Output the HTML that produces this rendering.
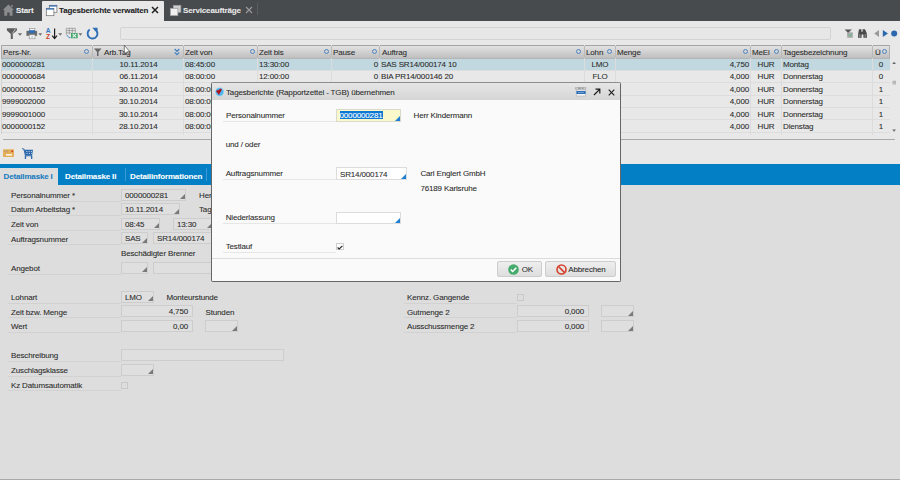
<!DOCTYPE html>
<html><head><meta charset="utf-8">
<style>
*{margin:0;padding:0;box-sizing:border-box}
html,body{width:900px;height:480px;overflow:hidden;background:#dddddd;font-family:"Liberation Sans",sans-serif;font-size:8px;letter-spacing:-0.15px;color:#2b2b2b}
.a{position:absolute}
.t{position:absolute;white-space:nowrap;line-height:9px;-webkit-text-stroke:0.08px currentColor}
.b{font-weight:bold}
#top{left:0;top:0;width:900px;height:21px;background:#474b4e}
#upper{left:0;top:21px;width:900px;height:143px;background:#e8e8e8}
#blue{left:0;top:164px;width:900px;height:21px;background:#0380c5}
#bottomline{left:0;top:479px;width:900px;height:1px;background:#a9a9ad}
.hdr{top:45px;height:13.5px;background:linear-gradient(#e2e2e2,#bfbfbf);border-top:1px solid #a2a6a8;border-bottom:1px solid #b4b4b4}
.col{position:absolute;top:45px;height:89.5px;border-left:1px solid #dcdcdc}
.hsep{position:absolute;top:46px;height:12px;width:1px;background:#b9b9b9}
.row{position:absolute;left:1px;width:889px;height:12.4px;border-bottom:1px solid #dddddd}
.circ{position:absolute;width:5.4px;height:5.4px;border:1.1px solid #4f86c2;border-radius:50%}
.fld{position:absolute;background:#dfdfdf;border:1px solid #cdcdcd}
.dd::after{content:"";position:absolute;right:0.5px;bottom:0.5px;border-left:5px solid transparent;border-bottom:5px solid #7a7a7a}
.lbl{position:absolute;height:1px;background:#d2d2d2}
</style></head><body>
<!-- top tab bar -->
<div class="a" id="top"></div>
<div class="a" style="left:42px;top:1px;width:122px;height:20px;background:#e8e8e8;border-radius:1px 1px 0 0"></div>
<!-- home icon -->
<svg class="a" style="left:2px;top:3px" width="13" height="14" viewBox="2 3 13 14"><path d="M8.4 4.4 L2.8 10 L4.3 10 L4.3 15.8 L7.2 15.8 L7.2 12.6 L9.6 12.6 L9.6 15.8 L12.5 15.8 L12.5 10 L14 10 Z" fill="#8b8c8d"/><path d="M11 5 L12.6 5 L12.6 7.6 L11 6.2 Z" fill="#8b8c8d"/></svg>
<div class="t b" style="left:16px;top:6px;color:#f0f0f0">Start</div>
<!-- window icon active -->
<svg class="a" style="left:45px;top:4px" width="13" height="13" viewBox="45 4 13 13"><rect x="49.3" y="5.3" width="7.6" height="7" fill="#fff" stroke="#6a6a6a" stroke-width="0.7"/><rect x="49.3" y="5.3" width="7.6" height="1.3" fill="#2f6fb5"/><rect x="46.3" y="8.3" width="7.6" height="7.4" fill="#fff" stroke="#6a6a6a" stroke-width="0.7"/><rect x="46.3" y="8.3" width="7.6" height="1.3" fill="#2f6fb5"/></svg>
<div class="t b" style="left:59px;top:6px;color:#222">Tagesberichte verwalten</div>
<svg class="a" style="left:151px;top:6px" width="8" height="8" viewBox="0 0 8 8"><path d="M1 1L7 7M7 1L1 7" stroke="#222" stroke-width="1.5"/></svg>
<!-- window icon inactive -->
<svg class="a" style="left:169px;top:4px" width="13" height="13" viewBox="169 4 13 13"><rect x="173.3" y="5.3" width="7.6" height="7" fill="#cfcfcf" stroke="#9a9a9a" stroke-width="0.7"/><rect x="170.3" y="8.3" width="7.6" height="7.4" fill="#f0f0f0" stroke="#9a9a9a" stroke-width="0.7"/></svg>
<div class="t b" style="left:183px;top:6px;color:#e8e8e8">Serviceaufträge</div>
<svg class="a" style="left:245px;top:6px" width="8" height="8" viewBox="0 0 8 8"><path d="M1 1L7 7M7 1L1 7" stroke="#9a9a9a" stroke-width="1.2"/></svg>
<div class="a" style="left:257px;top:3px;width:1px;height:12px;background:#5c5f62"></div>

<!-- upper area -->
<div class="a" id="upper"></div>
<!-- toolbar icons -->
<svg class="a" style="left:0;top:24px" width="104" height="18" viewBox="0 24 104 18">
<path d="M6.9 28.2 L16.9 28.2 L16.9 30.6 L12.8 34 L12.8 38.9 L10.8 38.9 L10.8 34 L6.9 30.6 Z" fill="#5e5e5e"/>
<path d="M15.6 28.8 L12.2 33.6" stroke="#e8e8e8" stroke-width="0.7"/>
<path d="M17.8 33.2 L22.2 33.2 L20 35.8 Z" fill="#707070"/>
<rect x="29.3" y="28.4" width="5.6" height="5" fill="#f4f4f4" stroke="#8a8a8a" stroke-width="0.6"/>
<rect x="26.4" y="30.9" width="10.7" height="4.9" fill="#6c6c6c"/>
<rect x="28.8" y="30.2" width="6.2" height="2.9" fill="#2f6db5"/>
<rect x="29.2" y="34.8" width="5.8" height="4" fill="#f6f6f6" stroke="#8a8a8a" stroke-width="0.6"/>
<rect x="31.4" y="36.4" width="1.4" height="1.2" fill="#8fb2dc"/>
<path d="M38.3 33.2 L42.3 33.2 L40.3 35.8 Z" fill="#707070"/>
<text x="45.7" y="33.2" font-family="Liberation Sans" font-weight="bold" font-size="6.6" fill="#3474c0">A</text>
<text x="45.9" y="39.3" font-family="Liberation Sans" font-weight="bold" font-size="6.6" fill="#cc3b25">Z</text>
<path d="M54.6 28.6 L54.6 38.4 M52.2 35.6 L54.6 38.6 L57 35.6" stroke="#1e1e1e" stroke-width="1.2" fill="none"/>
<path d="M58.2 33.3 L62.2 33.3 L60.2 35.8 Z" fill="#707070"/>
<path d="M66.3 28.3 h9 v7 M66.3 28.3 v6.5 M66.3 30.6 h9 M66.3 32.9 h5 M69.3 28.3 v6 M72.3 28.3 v5" stroke="#8d8d8d" stroke-width="0.7" fill="none"/>
<path d="M66.8 35 L69 37.6 L70.5 37.6" stroke="#3a7cc4" stroke-width="0.9" fill="none"/>
<rect x="71" y="33" width="6.7" height="5.3" fill="#43a66a"/>
<path d="M72.6 34 L76.1 37.3 M76.1 34 L72.6 37.3" stroke="#e9f6ee" stroke-width="1.1"/>
<path d="M78.5 33.3 L82.3 33.3 L80.4 35.8 Z" fill="#707070"/>
<path d="M89.7 29.6 A4.9 4.9 0 1 0 94.7 29.2" stroke="#2f6fb6" stroke-width="1.9" fill="none"/>
<path d="M92.3 27.8 L97.6 27.8 L97.4 33.3 Z" fill="#2f6fb6"/>
</svg>
<!-- search input -->
<div class="a" style="left:120px;top:27px;width:711px;height:13px;background:#e7e7e7;border:1px solid #d3d3d3;border-radius:2px"></div>
<!-- right toolbar icons -->
<svg class="a" style="left:838px;top:24px" width="62" height="20" viewBox="838 24 62 20">
<path d="M844.6 29.5 L852 29.5 L849 32.5 L849 36 L847.6 36 L847.6 32.5 Z" fill="#555"/>
<path d="M851.3 29.8 L849.5 32" stroke="#ddd" stroke-width="0.5"/>
<rect x="847.2" y="32.3" width="5.6" height="5.5" fill="#a9a9a9"/>
<path d="M848.6 35 L849.8 36.2 L851.8 34" stroke="#3cc47a" stroke-width="0.9" fill="none"/>
<path d="M859 29.3 h2.4 v2.5 h1.2 v-2.5 h2.4 L866.7 33 L867 37.8 L863.4 37.8 L863.4 34.5 L861.6 34.5 L861.6 37.8 L858 37.8 L858.3 33 Z" fill="#4a4a4a"/>
<rect x="859.2" y="34.2" width="1.2" height="3" fill="#8a8a8a"/>
<rect x="864.6" y="34.2" width="1.2" height="3" fill="#8a8a8a"/>
<path d="M879 29.9 L874.2 33.5 L879 37.1 Z" fill="#9a9a9a"/>
<path d="M882.8 29.9 L888 33.5 L882.8 37.1 Z" fill="#2c68ad"/>
<circle cx="894.2" cy="33.4" r="3" fill="#2c68ad"/>
</svg>
<!-- grid -->
<div class="a hdr" style="left:1px;width:889px"></div>
<div class="a" style="left:1px;top:58.5px;width:889px;height:12.4px;background:#c1d8e0"></div>
<div class="row" style="top:58.5px"></div>
<div class="row" style="top:70.9px"></div>
<div class="row" style="top:83.3px"></div>
<div class="row" style="top:95.7px"></div>
<div class="row" style="top:108.1px"></div>
<div class="row" style="top:120.5px"></div>
<div class="a" style="left:1px;top:45px;width:1px;height:13.5px;background:#a8a8a8"></div><div class="a" style="left:1px;top:58.5px;width:1px;height:75px;background:#d2d2d2"></div>
<div class="a" style="left:889px;top:45px;width:1px;height:13.5px;background:#b0b0b0"></div>
<!-- column separators -->
<div class="col" style="left:92px"></div>
<div class="col" style="left:183px"></div>
<div class="col" style="left:257px"></div>
<div class="col" style="left:331px"></div>
<div class="col" style="left:379px"></div>
<div class="col" style="left:584px"></div>
<div class="col" style="left:615px"></div>
<div class="col" style="left:750px"></div>
<div class="col" style="left:781px"></div>
<div class="col" style="left:872px"></div>
<div class="hsep" style="left:92px"></div>
<div class="hsep" style="left:183px"></div>
<div class="hsep" style="left:257px"></div>
<div class="hsep" style="left:331px"></div>
<div class="hsep" style="left:379px"></div>
<div class="hsep" style="left:584px"></div>
<div class="hsep" style="left:615px"></div>
<div class="hsep" style="left:750px"></div>
<div class="hsep" style="left:781px"></div>
<div class="hsep" style="left:872px"></div>
<!-- header labels -->
<div class="t" style="left:3px;top:48px">Pers-Nr.</div>
<div class="circ" style="left:83.5px;top:49px"></div>
<svg class="a" style="left:94px;top:48px" width="8" height="8" viewBox="0 0 8 8"><path d="M0 0.5 L7.5 0.5 L4.5 4 L4.5 8 L3 8 L3 4 Z" fill="#666"/></svg>
<div class="t" style="left:104px;top:48px">Arb.Tag</div>
<svg class="a" style="left:174px;top:47.5px" width="6" height="8" viewBox="0 0 6 8"><path d="M0.7 1 L3 3.3 L5.3 1 M0.7 4.3 L3 6.6 L5.3 4.3" stroke="#3f7fc4" stroke-width="1.2" fill="none"/></svg>
<div class="t" style="left:185px;top:48px">Zeit von</div>
<div class="circ" style="left:249.5px;top:49px"></div>
<div class="t" style="left:259px;top:48px">Zeit bis</div>
<div class="circ" style="left:323.5px;top:49px"></div>
<div class="t" style="left:333px;top:48px">Pause</div>
<div class="circ" style="left:371.5px;top:49px"></div>
<div class="t" style="left:382px;top:48px">Auftrag</div>
<div class="circ" style="left:575.5px;top:49px"></div>
<div class="t" style="left:586px;top:48px">Lohn</div>
<div class="circ" style="left:606.5px;top:49px"></div>
<div class="t" style="left:617px;top:48px">Menge</div>
<div class="circ" style="left:742.5px;top:49px"></div>
<div class="t" style="left:752px;top:48px">MeEi</div>
<div class="circ" style="left:773.5px;top:49px"></div>
<div class="t" style="left:783px;top:48px">Tagesbezeichnung</div>
<div class="t" style="left:875px;top:48px">Ü</div>
<div class="circ" style="left:882px;top:49px"></div>

<!-- rows data -->
<div class="t" style="left:2px;top:59.9px">0000000281</div>
<div class="t" style="right:742.5px;top:59.9px">10.11.2014</div>
<div class="t" style="left:185px;top:59.9px">08:45:00</div>
<div class="t" style="left:259px;top:59.9px">13:30:00</div>
<div class="t" style="right:522px;top:59.9px">0</div>
<div class="t" style="left:381px;top:59.9px">SAS SR14/000174 10</div>
<div class="t" style="left:580px;width:40px;text-align:center;top:59.9px">LMO</div>
<div class="t" style="right:151px;top:59.9px">4,750</div>
<div class="t" style="left:746px;width:40px;text-align:center;top:59.9px">HUR</div>
<div class="t" style="left:783px;top:59.9px">Montag</div>
<div class="t" style="left:861px;width:40px;text-align:center;top:59.9px">0</div>
<div class="t" style="left:2px;top:72.3px">0000000684</div>
<div class="t" style="right:742.5px;top:72.3px">06.11.2014</div>
<div class="t" style="left:185px;top:72.3px">08:00:00</div>
<div class="t" style="left:259px;top:72.3px">12:00:00</div>
<div class="t" style="right:522px;top:72.3px">0</div>
<div class="t" style="left:381px;top:72.3px">BIA PR14/000146 20</div>
<div class="t" style="left:580px;width:40px;text-align:center;top:72.3px">FLO</div>
<div class="t" style="right:151px;top:72.3px">4,000</div>
<div class="t" style="left:746px;width:40px;text-align:center;top:72.3px">HUR</div>
<div class="t" style="left:783px;top:72.3px">Donnerstag</div>
<div class="t" style="left:861px;width:40px;text-align:center;top:72.3px">0</div>
<div class="t" style="left:2px;top:84.7px">0000000152</div>
<div class="t" style="right:742.5px;top:84.7px">30.10.2014</div>
<div class="t" style="left:185px;top:84.7px">08:00:00</div>
<div class="t" style="right:151px;top:84.7px">4,000</div>
<div class="t" style="left:746px;width:40px;text-align:center;top:84.7px">HUR</div>
<div class="t" style="left:783px;top:84.7px">Donnerstag</div>
<div class="t" style="left:861px;width:40px;text-align:center;top:84.7px">1</div>
<div class="t" style="left:2px;top:97.1px">9999002000</div>
<div class="t" style="right:742.5px;top:97.1px">30.10.2014</div>
<div class="t" style="left:185px;top:97.1px">08:00:00</div>
<div class="t" style="right:151px;top:97.1px">4,000</div>
<div class="t" style="left:746px;width:40px;text-align:center;top:97.1px">HUR</div>
<div class="t" style="left:783px;top:97.1px">Donnerstag</div>
<div class="t" style="left:861px;width:40px;text-align:center;top:97.1px">1</div>
<div class="t" style="left:2px;top:109.5px">9999001000</div>
<div class="t" style="right:742.5px;top:109.5px">30.10.2014</div>
<div class="t" style="left:185px;top:109.5px">08:00:00</div>
<div class="t" style="right:151px;top:109.5px">4,000</div>
<div class="t" style="left:746px;width:40px;text-align:center;top:109.5px">HUR</div>
<div class="t" style="left:783px;top:109.5px">Donnerstag</div>
<div class="t" style="left:861px;width:40px;text-align:center;top:109.5px">1</div>
<div class="t" style="left:2px;top:121.9px">0000000152</div>
<div class="t" style="right:742.5px;top:121.9px">28.10.2014</div>
<div class="t" style="left:185px;top:121.9px">08:00:00</div>
<div class="t" style="right:151px;top:121.9px">4,000</div>
<div class="t" style="left:746px;width:40px;text-align:center;top:121.9px">HUR</div>
<div class="t" style="left:783px;top:121.9px">Dienstag</div>
<div class="t" style="left:861px;width:40px;text-align:center;top:121.9px">1</div>

<svg class="a" style="left:890px;top:58px" width="10" height="80" viewBox="890 58 10 80"><path d="M892.2 64 L894.1 61.8 L896 64 Z" fill="#6a6a6a"/><path d="M892.5 81.3h3.5M892.5 82.6h3.5M892.5 83.9h3.5" stroke="#9a9a9a" stroke-width="0.8"/><path d="M892.2 129.5 L894.1 131.7 L896 129.5 Z" fill="#6a6a6a"/></svg>
<!-- grid bottom line -->
<div class="a" style="left:3px;top:138.5px;width:892px;height:1px;background:#a9a9a9"></div>
<!-- small icons -->
<svg class="a" style="left:0;top:142px" width="40" height="20" viewBox="0 142 40 20">
<rect x="3" y="149.3" width="11" height="7.6" rx="0.5" fill="#e3b05a"/>
<rect x="4.2" y="150.4" width="3.8" height="1.8" fill="#c9a069"/>
<circle cx="12.1" cy="151.3" r="1" fill="#d8402c"/>
<rect x="6" y="154" width="6" height="1.6" fill="#fbf3e4"/>
<path d="M22.2 148.5 L24 149.3 L25.5 155.8 L32.2 155.8" stroke="#2c67ab" stroke-width="1.1" fill="none"/>
<path d="M24.6 149.8 L33 149.8 L32.2 155.2 L25.6 155.2 Z" fill="#2c67ab"/>
<path d="M26.3 151.5 h1 M28.6 151.5 h1 M30.9 151.5 h1 M26.6 153.4 h1 M28.9 153.4 h1 M31.1 153.4 h0.8" stroke="#dfe8f2" stroke-width="0.9"/>
<rect x="24.8" y="156" width="1.3" height="3" fill="#2c67ab"/>
<rect x="31" y="156" width="1.3" height="3" fill="#2c67ab"/>
</svg>
<!-- blue tab bar -->
<div class="a" id="blue"></div>
<div class="a" style="left:0;top:167.5px;width:58px;height:17.5px;background:#dddddd"></div>
<div class="t b" style="left:3.5px;top:172px;color:#1a7cc0">Detailmaske I</div>
<div class="t b" style="left:65px;top:172px;color:#fff">Detailmaske II</div>
<div class="a" style="left:124.5px;top:168px;width:1px;height:13px;background:#3a9ad6"></div>
<div class="t b" style="left:130px;top:172px;color:#fff">Detailinformationen</div>
<div class="a" style="left:206px;top:168px;width:1px;height:13px;background:#3a9ad6"></div>

<!-- form -->
<div class="t" style="left:11px;top:190.87px">Personalnummer *</div>
<div class="lbl" style="left:8px;top:200.60px;width:113px"></div>
<div class="fld dd" style="left:121px;top:188.50px;width:65px;height:12.2px"><div class="t" style="left:3px;top:1.1px">0000000281</div></div>
<div class="t" style="left:199px;top:190.87px">Herr Kindermann</div>
<div class="t" style="left:11px;top:205.47px">Datum Arbeitstag *</div>
<div class="lbl" style="left:8px;top:215.20px;width:113px"></div>
<div class="fld dd" style="left:121px;top:203.10px;width:59px;height:12.2px"><div class="t" style="left:3px;top:1.1px">10.11.2014</div></div>
<div class="t" style="left:199px;top:205.47px">Tagesbezeichnung</div>
<div class="t" style="left:11px;top:220.07px">Zeit von</div>
<div class="lbl" style="left:8px;top:229.80px;width:113px"></div>
<div class="fld dd" style="left:121px;top:217.70px;width:39px;height:12.2px"><div class="t" style="left:3px;top:1.1px">08:45</div></div>
<div class="fld dd" style="left:173px;top:217.70px;width:40px;height:12.2px"><div class="t" style="left:3px;top:1.1px">13:30</div></div>
<div class="t" style="left:11px;top:234.67px">Auftragsnummer</div>
<div class="lbl" style="left:8px;top:244.40px;width:113px"></div>
<div class="fld dd" style="left:121px;top:232.30px;width:27px;height:12.2px"><div class="t" style="left:3px;top:1.1px">SAS</div></div>
<div class="fld" style="left:153px;top:232.30px;width:60px;height:12.2px"><div class="t" style="left:3px;top:1.1px">SR14/000174</div></div>
<div class="t" style="left:121px;top:249.27px">Beschädigter Brenner</div>
<div class="t" style="left:11px;top:263.87px">Angebot</div>
<div class="lbl" style="left:8px;top:273.60px;width:113px"></div>
<div class="fld dd" style="left:121px;top:261.50px;width:27px;height:12.2px"></div>
<div class="fld" style="left:153px;top:261.50px;width:60px;height:12.2px"></div>
<div class="t" style="left:11px;top:293.07px">Lohnart</div>
<div class="lbl" style="left:8px;top:302.80px;width:113px"></div>
<div class="fld dd" style="left:121px;top:290.70px;width:33px;height:12.2px"><div class="t" style="left:3px;top:1.1px">LMO</div></div>
<div class="t" style="left:166.5px;top:293.07px">Monteurstunde</div>
<div class="t" style="left:11px;top:307.67px">Zeit bzw. Menge</div>
<div class="lbl" style="left:8px;top:317.40px;width:113px"></div>
<div class="fld" style="left:121px;top:305.30px;width:72px;height:12.2px"><div class="t" style="right:4px;top:0.7px">4,750</div></div>
<div class="t" style="left:205.5px;top:307.67px">Stunden</div>
<div class="t" style="left:11px;top:322.27px">Wert</div>
<div class="lbl" style="left:8px;top:332.00px;width:113px"></div>
<div class="fld" style="left:121px;top:319.90px;width:72px;height:12.2px"><div class="t" style="right:4px;top:0.7px">0,00</div></div>
<div class="fld dd" style="left:205px;top:319.90px;width:33px;height:12.2px"></div>
<div class="t" style="left:11px;top:351.47px">Beschreibung</div>
<div class="lbl" style="left:8px;top:361.20px;width:113px"></div>
<div class="fld" style="left:121px;top:349.10px;width:163px;height:12.2px"></div>
<div class="t" style="left:11px;top:366.07px">Zuschlagsklasse</div>
<div class="lbl" style="left:8px;top:375.80px;width:113px"></div>
<div class="fld dd" style="left:121px;top:363.70px;width:33px;height:12.2px"></div>
<div class="t" style="left:11px;top:380.67px">Kz Datumsautomatik</div>
<div class="lbl" style="left:8px;top:390.40px;width:113px"></div>
<div class="a" style="left:121px;top:381.80px;width:7px;height:7px;border:1px solid #c9c9c9"></div>
<div class="t" style="left:407px;top:293.07px">Kennz. Gangende</div>
<div class="lbl" style="left:404px;top:302.80px;width:113px"></div>
<div class="a" style="left:517px;top:294.20px;width:7px;height:7px;border:1px solid #c9c9c9"></div>
<div class="t" style="left:407px;top:307.67px">Gutmenge 2</div>
<div class="lbl" style="left:404px;top:317.40px;width:113px"></div>
<div class="fld" style="left:517px;top:305.30px;width:72px;height:12.2px"><div class="t" style="right:4px;top:0.7px">0,000</div></div>
<div class="fld dd" style="left:601px;top:305.30px;width:33px;height:12.2px"></div>
<div class="t" style="left:407px;top:322.27px">Ausschussmenge 2</div>
<div class="lbl" style="left:404px;top:332.00px;width:113px"></div>
<div class="fld" style="left:517px;top:319.90px;width:72px;height:12.2px"><div class="t" style="right:4px;top:0.7px">0,000</div></div>
<div class="fld dd" style="left:601px;top:319.90px;width:33px;height:12.2px"></div>

<!-- modal -->
<div class="a" style="left:211px;top:82px;width:410px;height:200px;background:#fafafa;border:1px solid #666;border-top-color:#8c8c8c;border-radius:2px"></div>
<div class="a" style="left:212px;top:83px;width:408px;height:16.6px;background:linear-gradient(#e6e6e6,#d5d5d5)"></div>
<svg class="a" style="left:214px;top:86px" width="11" height="11" viewBox="214 86 11 11"><circle cx="219.6" cy="91.8" r="4.4" fill="#7fd0f7"/><circle cx="219.6" cy="91.8" r="3.6" fill="#52b6ee"/><path d="M216.2 90.6 L218.2 90.2 L220.4 88.4 L221.8 89.2 L221 91.4 L219.4 93.4 L219.8 94.6 L218.4 94.4 L217.4 92.6 L216.6 92.4 Z" fill="#b0101a"/></svg>
<div class="t" style="left:226px;top:87.6px">Tagesberichte (Rapportzettel - TGB) übernehmen</div>
<svg class="a" style="left:575px;top:86px" width="12" height="11" viewBox="575 86 12 11"><rect x="575.3" y="87.2" width="10.8" height="2.2" fill="#9a9a9a"/><path d="M576.3 88.2h1.8 M580.8 88.2h1 M583.6 88.2h1.8" stroke="#fafafa" stroke-width="0.9"/><rect x="576.2" y="90" width="9.6" height="6" fill="#f4f4f4" stroke="#a8a8a8" stroke-width="0.5"/><rect x="576.4" y="91" width="9.2" height="3" fill="#2f6fb8"/><path d="M578 92.5h6" stroke="#9cc0e8" stroke-width="0.6"/></svg>
<svg class="a" style="left:593px;top:88px" width="8" height="8" viewBox="0 0 8 8"><path d="M1 7 L6.6 1.4 M2.5 1.2 L6.8 1.2 L6.8 5.5" stroke="#1b1b1b" stroke-width="1.2" fill="none"/></svg>
<svg class="a" style="left:607.5px;top:88.5px" width="7" height="7" viewBox="0 0 7 7"><path d="M0.7 0.7 L6.3 6.3 M6.3 0.7 L0.7 6.3" stroke="#1b1b1b" stroke-width="1.1"/></svg>

<div class="t" style="left:226px;top:110.7px">Personalnummer</div>
<div class="lbl" style="left:223px;top:121px;width:113px;background:#e6e6e6"></div>
<div class="a" style="left:336px;top:109.4px;width:65px;height:12.2px;background:#fbf9cb;border:1px solid #d9d9cc"></div>
<div class="a" style="left:339.5px;top:110.8px;width:43.7px;height:8.7px;background:#0b78d3"></div>
<div class="t" style="left:339.5px;top:110.9px;color:#fff">0000000281</div>
<div class="a" style="left:395px;top:115.5px;border-left:5px solid transparent;border-bottom:5px solid #1f7fd1"></div>
<div class="t" style="left:413.5px;top:111.3px">Herr Kindermann</div>

<div class="t" style="left:225.7px;top:140.2px">und / oder</div>

<div class="t" style="left:225.7px;top:169.1px">Auftragsnummer</div>
<div class="lbl" style="left:223px;top:179px;width:113px;background:#e6e6e6"></div>
<div class="a" style="left:336px;top:167.2px;width:71px;height:12.5px;background:#fff;border:1px solid #dcdcdc"></div>
<div class="t" style="left:340px;top:169.6px">SR14/000174</div>
<div class="a" style="left:401px;top:173.6px;border-left:5px solid transparent;border-bottom:5px solid #1f7fd1"></div>
<div class="t" style="left:420.4px;top:169.2px">Carl Englert GmbH</div>
<div class="t" style="left:420.4px;top:183.6px">76189 Karlsruhe</div>

<div class="t" style="left:225.7px;top:212.5px">Niederlassung</div>
<div class="lbl" style="left:223px;top:223px;width:113px;background:#e6e6e6"></div>
<div class="a" style="left:336px;top:211.5px;width:65px;height:12px;background:#fff;border:1px solid #dcdcdc"></div>
<div class="a" style="left:395px;top:217.5px;border-left:5px solid transparent;border-bottom:5px solid #1f7fd1"></div>

<div class="t" style="left:225.7px;top:241.9px">Testlauf</div>
<div class="lbl" style="left:223px;top:252px;width:113px;background:#e6e6e6"></div>
<div class="a" style="left:336px;top:243.4px;width:7.5px;height:7px;background:#fff;border:1px solid #d0d0d0"></div>
<svg class="a" style="left:337px;top:244.5px" width="6" height="5" viewBox="0 0 6 5"><path d="M0.6 2.5 L2.2 4 L5.4 0.8" stroke="#222" stroke-width="1.1" fill="none"/></svg>

<div class="a" style="left:212px;top:257.5px;width:408px;height:1px;background:#dcdcdc"></div>
<div class="a" style="left:497px;top:261.3px;width:45px;height:15.5px;background:linear-gradient(#eeeeee,#dedede);border:1px solid #cdcdcd;border-radius:2px"></div>
<svg class="a" style="left:508px;top:264px" width="11" height="11" viewBox="0 0 11 11"><circle cx="5.5" cy="5.5" r="5.3" fill="#45ab6c"/><path d="M2.8 5.6 L4.7 7.5 L8.3 3.8" stroke="#fff" stroke-width="1.5" fill="none"/></svg>
<div class="t b" style="left:521.7px;top:265px;color:#333;font-weight:normal">OK</div>
<div class="a" style="left:544.5px;top:261.3px;width:71.5px;height:15.5px;background:linear-gradient(#eeeeee,#dedede);border:1px solid #cdcdcd;border-radius:2px"></div>
<svg class="a" style="left:555.5px;top:264px" width="11" height="11" viewBox="0 0 11 11"><circle cx="5.5" cy="5.5" r="4.5" fill="none" stroke="#d6402e" stroke-width="1.6"/><path d="M2.4 2.4 L8.6 8.6" stroke="#d6402e" stroke-width="1.6"/></svg>
<div class="t" style="left:568.3px;top:265px">Abbrechen</div>

<div class="a" id="bottomline"></div>

<svg class="a" style="left:120px;top:42px" width="14" height="16" viewBox="120 42 14 16"><path d="M124.3 45.3 L124.3 54 L126.3 52.2 L127.6 55.2 L128.6 54.8 L127.4 51.8 L129.9 51.8 Z" fill="#fff" stroke="#333" stroke-width="0.6"/></svg>
</body></html>
